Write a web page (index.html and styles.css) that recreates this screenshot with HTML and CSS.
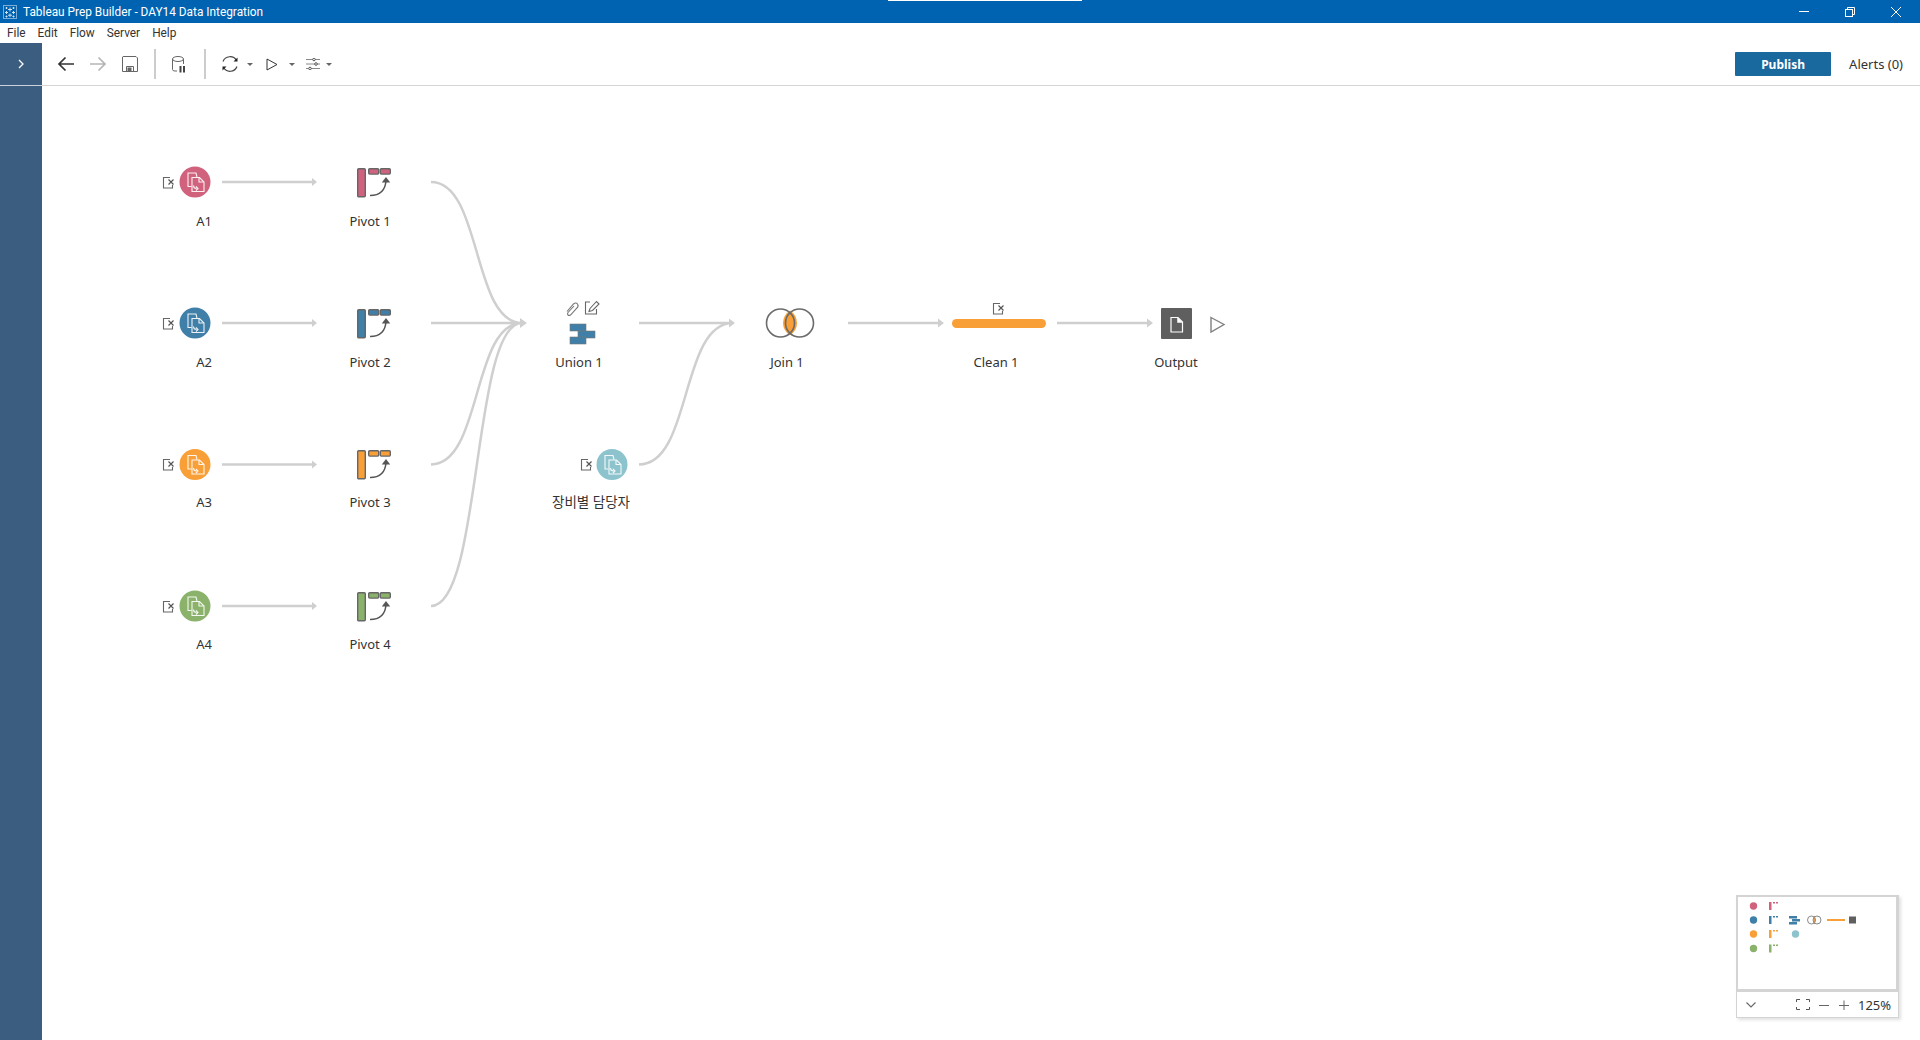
FILE: index.html
```html
<!DOCTYPE html>
<html lang="en">
<head>
  <meta charset="UTF-8" />
  <title>Tableau Prep Builder - DAY14 Data Integration</title>
  <link rel="stylesheet" href="styles.css">
</head>
<body>
  <header class="titlebar">
    <svg class="app-logo" width="14" height="14" viewBox="0 0 14 14" fill="none" stroke="#cfe0ee" stroke-width="1">
      <rect x="0.5" y="0.5" width="13" height="13" stroke-opacity="0.6"/>
      <path d="M7 2.5v4M5 4.5h4M3.5 6v3M2 7.5h3M10.5 6v3M9 7.5h3M7 8.5v3.5M5 10.2h4M3.5 2v2M2.5 3h2M10.5 2v2M9.5 3h2M3.5 10.5v2M2.5 11.5h2M10.5 10.5v2M9.5 11.5h2"/>
    </svg>
    <span class="app-title">Tableau Prep Builder - DAY14 Data Integration</span>
    <div class="title-tab"></div>
    <div class="win-controls">
      <svg width="12" height="12" viewBox="0 0 12 12" stroke="#fff" fill="none"><path d="M1 5.500h10"/></svg>
      <svg width="12" height="12" viewBox="0 0 12 12" stroke="#fff" fill="none"><rect x="1.500" y="3.500" width="7" height="7"/><path d="M3.500 3.500v-2h7v7h-2"/></svg>
      <svg width="12" height="12" viewBox="0 0 12 12" stroke="#fff" fill="none"><path d="M1 1l10 10M11 1L1 11"/></svg>
    </div>
  </header>

  <nav class="menubar">
    <span>File</span>
    <span>Edit</span>
    <span>Flow</span>
    <span>Server</span>
    <span>Help</span>
  </nav>

  <div class="main">
    <aside class="sidebar">
      <div class="sidebar-top">
        <svg width="8" height="10" viewBox="0 0 8 10" fill="none" stroke="#fff" stroke-width="1.300"><path d="M2 1l4 4-4 4"/></svg>
      </div>
    </aside>

    <div class="workspace">
      <div class="toolbar">
        <button class="tool">
          <svg width="18" height="16" viewBox="0 0 18 16" fill="none" stroke="#333" stroke-width="1.700"><path d="M17 8H2M8.500 1.500L2 8l6.500 6.500"/></svg>
        </button>
        <button class="tool">
          <svg width="18" height="16" viewBox="0 0 18 16" fill="none" stroke="#b5b5b5" stroke-width="1.700"><path d="M1 8h15M9.500 1.500L16 8l-6.500 6.500"/></svg>
        </button>
        <button class="tool">
          <svg width="16" height="16" viewBox="0 0 16 16" fill="none" stroke="#666" stroke-width="1"><path d="M1 .5h13l1.500 1.500v13.500H.5V1z"/><path d="M4.500 15.500v-5h7v5"/><rect x="6" y="12" width="3" height="3.500" fill="#666"/></svg>
        </button>
        <div class="tool-sep first"></div>
        <button class="tool db">
          <svg width="14" height="17" viewBox="0 0 14 17" fill="none" stroke="#666" stroke-width="1"><ellipse cx="6" cy="3" rx="5.500" ry="2.500"/><path d="M.5 3v10.500q0 1.500 2.500 1.500h2M11.500 3v5"/><path d="M8.500 10v6.500M12 10v6.500" stroke="#444" stroke-width="2"/></svg>
        </button>
        <div class="tool-sep"></div>
        <button class="tool">
          <svg width="18" height="18" viewBox="0 0 18 18" fill="none" stroke="#444" stroke-width="1.200"><path d="M2 6.500A7.500 7.500 0 0 1 15.500 5.500M16 11.500A7.500 7.500 0 0 1 2.500 12.500"/><path d="M16.500 2.500v4h-4z" fill="#222" stroke="none"/><path d="M1.500 15.500v-4h4z" fill="#222" stroke="none"/></svg>
        </button>
        <i class="caret tight"></i>
        <button class="tool small play">
          <svg width="12" height="13" viewBox="0 0 12 13" fill="none" stroke="#333" stroke-width="1"><path d="M1 1l10 5.500L1 12z"/></svg>
        </button>
        <i class="caret"></i>
        <button class="tool small sliders">
          <svg width="14" height="12" viewBox="0 0 14 12" fill="none" stroke="#888" stroke-width="1"><path d="M0 1.500h14M0 6h14M0 10.500h14"/><circle cx="8" cy="1.500" r="1.300" fill="#fff" stroke="#555"/><circle cx="10" cy="6" r="1.300" fill="#fff" stroke="#555"/><circle cx="4" cy="10.500" r="1.300" fill="#fff" stroke="#555"/></svg>
        </button>
        <i class="caret tight"></i>
        <button class="publish">Publish</button>
        <span class="alerts">Alerts (0)</span>
      </div>

      <div class="canvas">
        <svg class="flow" width="1878" height="954" viewBox="42 86 1878 954" fill="none">
          <defs>
            <symbol id="note" viewBox="0 0 12 12" overflow="visible">
              <path d="M7 .5H.5V11h9V8" stroke="#666" stroke-width="1.100" fill="none"/>
              <path d="M5.500 2.500l5 5M10.500 2.500l-5 5" stroke="#555" stroke-width="1.200"/>
            </symbol>
            <symbol id="src" viewBox="-16 -16 32 32" overflow="visible">
              <circle r="15.500" fill="currentColor"/>
              <g stroke="#fff" stroke-width="1.100" fill="none" stroke-opacity="0.9">
                <path d="M-3.500 4.500h-3.500v-13.500h8l1 4"/>
                <path d="M-3 -4.500h7.500l4.500 4.500v9.500h-12z"/>
                <path d="M4 -4.500v4.500h4.500"/>
                <path d="M-1.500 3.500q0 3 3 3M1 4.500l2 2-2 2"/>
              </g>
            </symbol>
            <symbol id="pivot" viewBox="0 0 34 30" overflow="visible">
              <rect x="0.700" y="0.700" width="7.600" height="28" rx="1" fill="currentColor" stroke="#666" stroke-width="1.400"/>
              <rect x="11.700" y="0.700" width="10" height="5.400" rx="1" fill="currentColor" stroke="#666" stroke-width="1.400"/>
              <rect x="23.300" y="0.700" width="10" height="5.400" rx="1" fill="currentColor" stroke="#666" stroke-width="1.400"/>
              <path d="M13 27.500q15 0 16-15" stroke="#555" stroke-width="1.500"/>
              <path d="M29 9l4.200 5.500h-8.400z" fill="#555"/>
            </symbol>
          </defs>

          <g class="edges" stroke="#cfcfcf" stroke-width="2.500">
            <path d="M222 182h92M222 323h92M222 464.500h92M222 606h92"/>
            <path d="M431 182C482 182 472 323 522 323M431 323h92M431 464.500C482 464.500 472 323 522 323M431 606C482 606 472 323 522 323"/>
            <path d="M639 323h93M639 464.500C692 464.500 680 323 733 323"/>
            <path d="M848 323h93M1057 323h94"/>
          </g>
          <g class="arrows" fill="#cfcfcf">
            <path d="M312 178l5 4-5 4zM312 319l5 4-5 4zM312 460.500l5 4-5 4zM312 602l5 4-5 4z"/>
            <path d="M520 318l7 5-7 5zM729 318.500l6 4.500-6 4.500zM938 318.500l6 4.500-6 4.500zM1147 318.500l6 4.500-6 4.500z"/>
          </g>

          <use href="#note" x="163" y="177" width="12" height="12"/>
          <use href="#note" x="163" y="318" width="12" height="12"/>
          <use href="#note" x="163" y="459" width="12" height="12"/>
          <use href="#note" x="163" y="601" width="12" height="12"/>
          <use href="#note" x="581" y="459" width="12" height="12"/>
          <use href="#note" x="993" y="303" width="12" height="12"/>

          <use href="#src" class="c-pink" x="179" y="166" width="32" height="32"/>
          <use href="#src" class="c-blue" x="179" y="307" width="32" height="32"/>
          <use href="#src" class="c-orange" x="179" y="448.500" width="32" height="32"/>
          <use href="#src" class="c-green" x="179" y="590" width="32" height="32"/>
          <use href="#src" class="c-teal" x="596" y="448.500" width="32" height="32"/>

          <use href="#pivot" class="c-pink" x="357" y="168" width="34" height="30"/>
          <use href="#pivot" class="c-blue" x="357" y="309" width="34" height="30"/>
          <use href="#pivot" class="c-orange" x="357" y="450" width="34" height="30"/>
          <use href="#pivot" class="c-green" x="357" y="592" width="34" height="30"/>

          <!-- union -->
          <g stroke="#777" stroke-width="0.600">
            <rect class="fill-blue" x="570" y="324" width="16" height="7"/>
            <rect class="fill-blue" x="578" y="331" width="17" height="7"/>
            <rect class="fill-blue" x="570" y="337" width="16" height="7"/>
          </g>
          <path d="M567 311.500l6.500-7.500q2.500-2 4 0t-.5 4l-6.500 7q-1.500 1-2.500 0t0-2.500l6-6.500" stroke="#777" stroke-width="1.100"/>
          <path d="M590 302h-4.500v12h11v-5" stroke="#666" stroke-width="1.100"/>
          <path d="M590 308.500l6.500-7 2.500 2.500-6.500 6.500-3.500 1z" stroke="#666" stroke-width="1.100"/>

          <!-- join -->
          <path class="fill-orange" d="M790 310.500a14.500 14.500 0 0 1 0 24.800a14.500 14.500 0 0 1 0-24.800z"/>
          <g stroke="#6b6b6b" stroke-width="1.600">
            <circle cx="780.500" cy="323" r="14"/>
            <circle cx="799.500" cy="323" r="14"/>
          </g>

          <!-- clean -->
          <rect class="fill-orange" x="952" y="319" width="94" height="9" rx="4.500"/>

          <!-- output -->
          <rect x="1161" y="308" width="31" height="31" rx="1" fill="#5f5f5f"/>
          <path d="M1171 317.500h7l4.500 4.500v10h-11.500z" stroke="#fff" stroke-width="1.200"/>
          <path d="M1177.500 317.500v5h5" fill="#fff" stroke="#fff" stroke-width="0.500"/>
          <path d="M1211 317.500l13 7-13 7.500z" stroke="#808080" stroke-width="1.400"/>
        </svg>

        <div class="label l-a1">A1</div>
        <div class="label l-a2">A2</div>
        <div class="label l-a3">A3</div>
        <div class="label l-a4">A4</div>
        <div class="label l-p1">Pivot 1</div>
        <div class="label l-p2">Pivot 2</div>
        <div class="label l-p3">Pivot 3</div>
        <div class="label l-p4">Pivot 4</div>
        <div class="label l-union">Union 1</div>
        <div class="label l-kr" lang="ko">장비별 담당자</div>
        <div class="label l-join">Join 1</div>
        <div class="label l-clean">Clean 1</div>
        <div class="label l-output">Output</div>

        <div class="minimap">
          <div class="mini-view">
            <svg width="156" height="91" viewBox="1739 899 156 91" fill="none">
              <defs>
                <symbol id="mini-pivot" viewBox="0 0 9 8" overflow="visible">
                  <rect width="2.500" height="8" fill="currentColor"/>
                  <rect x="4" width="2" height="1.500" fill="currentColor"/>
                  <rect x="7" width="2" height="1.500" fill="currentColor"/>
                </symbol>
              </defs>
              <circle class="fill-pink" cx="1753.500" cy="907" r="3.700"/>
              <circle class="fill-blue" cx="1753.500" cy="921" r="3.700"/>
              <circle class="fill-orange" cx="1753.500" cy="935" r="3.700"/>
              <circle class="fill-green" cx="1753.500" cy="949.500" r="3.700"/>
              <use href="#mini-pivot" class="c-pink" x="1769" y="903" width="9" height="8"/>
              <use href="#mini-pivot" class="c-blue" x="1769" y="917" width="9" height="8"/>
              <use href="#mini-pivot" class="c-orange" x="1769" y="931" width="9" height="8"/>
              <use href="#mini-pivot" class="c-green" x="1769" y="945.500" width="9" height="8"/>
              <path class="fill-blue" d="M1789 917h8v2.500h-8zM1792 920h8v2.500h-8zM1789 923h8v2.500h-8z"/>
              <path class="fill-orange" d="M1814.500 916.500q2 4.500 0 9q-2-4.500 0-9z"/>
              <circle cx="1811.500" cy="921" r="4" stroke="#8a8a8a" stroke-width="1"/>
              <circle cx="1817" cy="921" r="4" stroke="#8a8a8a" stroke-width="1"/>
              <rect class="fill-orange" x="1827" y="920" width="18" height="2"/>
              <rect x="1849" y="917.500" width="7" height="7" fill="#5f5f5f"/>
              <circle class="fill-teal" cx="1795.500" cy="935" r="3.700"/>
            </svg>
          </div>
          <div class="mini-bar">
            <svg class="mini-chevron" width="10" height="6" viewBox="0 0 10 6" fill="none" stroke="#666" stroke-width="1.100"><path d="M.5 .5L5 5l4.500-4.500"/></svg>
            <svg class="mini-fit" width="14" height="11" viewBox="0 0 14 11" fill="none" stroke="#555" stroke-width="1"><path d="M.5 3V.5H4M10 .5h3.500V3M.5 8v2.500H4M10 10.500h3.500V8"/></svg>
            <svg width="10" height="10" viewBox="0 0 10 10" fill="none" stroke="#666" stroke-width="1"><path d="M0 5.500h10"/></svg>
            <svg class="mini-plus" width="10" height="10" viewBox="0 0 10 10" fill="none" stroke="#666" stroke-width="1"><path d="M0 5.500h10M5 .5v10"/></svg>
            <span class="zoom-value">125%</span>
          </div>
        </div>
      </div>
    </div>
  </div>
</body>
</html>
```

FILE: styles.css
```css
html, body {
  height: 100%;
}

body {
  margin: 0;
  display: flex;
  flex-direction: column;
  height: 1040px;
  overflow: hidden;
  background: #fff;
  color: #333;
  font-family: "Noto Sans", "Noto Sans CJK KR", sans-serif;
  font-size: 12px;
}

/* Title bar */
.titlebar {
  position: relative;
  display: flex;
  align-items: center;
  height: 23px;
  padding-left: 3px;
  background: #0063b1;
  color: #fff;
  flex-shrink: 0;
}

.app-logo {
  margin-right: 6px;
}

.app-title {
  font-family: Roboto, sans-serif;
  font-size: 11.85px;
}

.title-tab {
  position: absolute;
  left: 888px;
  top: 0;
  width: 194px;
  height: 1px;
  background: #fff;
}

.win-controls {
  margin-left: auto;
  display: flex;
  gap: 34px;
  padding-right: 18px;
}

/* Menu */
.menubar {
  display: flex;
  align-items: center;
  gap: 12px;
  height: 20px;
  padding-left: 7px;
  color: #333;
  font-family: Roboto, sans-serif;
  font-size: 11.85px;
  flex-shrink: 0;
}

.main {
  display: flex;
  flex: 1;
  min-height: 0;
}

/* Sidebar */
.sidebar {
  width: 42px;
  background: #3a5d80;
  flex-shrink: 0;
}

.sidebar-top {
  display: flex;
  align-items: center;
  justify-content: center;
  box-sizing: border-box;
  height: 43px;
  border-bottom: 1px solid #c9d2da;
}

.workspace {
  display: flex;
  flex-direction: column;
  flex: 1;
  min-width: 0;
}

/* Toolbar */
.toolbar {
  display: flex;
  align-items: center;
  box-sizing: border-box;
  height: 43px;
  padding-left: 8px;
  border-bottom: 1px solid #d6d6d6;
  flex-shrink: 0;
}

.tool {
  display: flex;
  align-items: center;
  justify-content: center;
  width: 32px;
  height: 32px;
  padding: 0;
  border: none;
  background: none;
}

.tool.small {
  width: 24px;
}

.tool.db {
  margin-left: 7px;
}

.tool.play {
  margin-left: 7px;
}

.tool.sliders {
  margin-left: 6px;
}

.tool-sep {
  width: 2px;
  height: 30px;
  margin: 0 8px 0 9px;
  background: #ccc;
}

.tool-sep.first {
  margin: 0 0 0 8px;
}

.caret {
  width: 0;
  height: 0;
  margin-left: 5px;
  border-left: 3px solid transparent;
  border-right: 3px solid transparent;
  border-top: 3px solid #666;
}

.caret.tight {
  margin-left: 1px;
}

.publish {
  width: 96px;
  height: 24px;
  margin-left: auto;
  padding: 0;
  border: none;
  border-radius: 1px;
  background: #1a699e;
  color: #fff;
  font-family: inherit;
  font-size: 12px;
  font-weight: 700;
}

.alerts {
  margin: 0 17px 0 18px;
  color: #333;
  font-size: 13px;
}

/* Flow canvas */
.canvas {
  position: relative;
  flex: 1;
  min-height: 0;
}

.flow {
  position: absolute;
  left: 0;
  top: 0;
}

.c-pink { color: #d1627e; }
.c-blue { color: #3f7fa8; }
.c-orange { color: #f99f38; }
.c-green { color: #8ab26b; }
.c-teal { color: #8cc3cd; }

.fill-pink { fill: #d1627e; }
.fill-blue { fill: #3f7fa8; }
.fill-orange { fill: #f99f38; }
.fill-green { fill: #8ab26b; }
.fill-teal { fill: #8cc3cd; }

.label {
  position: absolute;
  transform: translate(-50%, -50%);
  color: #333;
  font-size: 13px;
  line-height: 16px;
  white-space: nowrap;
}

/* positions are canvas coords, the canvas starts at 42,86 */
.l-a1 { left: 162px; top: 135px; }
.l-a2 { left: 162px; top: 276px; }
.l-a3 { left: 162px; top: 416px; }
.l-a4 { left: 162px; top: 558px; }
.l-p1 { left: 328px; top: 135px; }
.l-p2 { left: 328px; top: 276px; }
.l-p3 { left: 328px; top: 416px; }
.l-p4 { left: 328px; top: 558px; }
.l-union { left: 537px; top: 276px; }
.l-kr { left: 549px; top: 416px; font-size: 13.5px; }
.l-join { left: 745px; top: 276px; }
.l-clean { left: 954px; top: 276px; }
.l-output { left: 1134px; top: 276px; }

/* Minimap */
.minimap {
  position: absolute;
  left: 1694px;
  top: 809px;
  width: 163px;
  height: 123px;
  box-sizing: border-box;
  display: flex;
  flex-direction: column;
  border: 1px solid #d4d4d4;
  background: #fff;
  box-shadow: 2px 2px 3px rgba(0, 0, 0, 0.12);
}

.mini-view {
  height: 97px;
  box-sizing: border-box;
  border: 2px solid #d4d4d4;
  border-bottom-width: 3px;
  border-right-width: 3px;
  margin: -1px -1px 0;
  padding: 1px;
}

.mini-view svg {
  display: block;
}

.mini-bar {
  display: flex;
  align-items: center;
  flex: 1;
  padding-left: 9px;
}

.mini-chevron {
  margin-right: 40px;
}

.mini-fit {
  margin-right: 9px;
}

.mini-plus {
  margin-left: 10px;
}

.zoom-value {
  margin-left: 9px;
  color: #333;
  font-size: 13px;
}
```
